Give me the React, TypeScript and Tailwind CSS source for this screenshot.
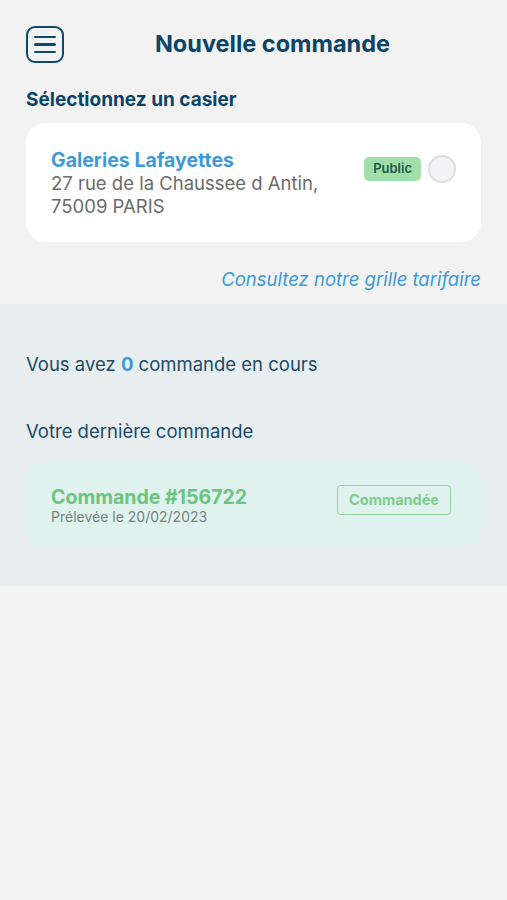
export default function App() {
  return (
    <div className="min-h-[900px] w-full bg-[#f2f2f2]" style={{ fontFamily: "Inter, 'Noto Sans', sans-serif" }}>
      <div className="px-[26px]">
        <div className="relative flex h-[88px] items-center justify-center">
          <div className="absolute left-0 top-[26px] flex h-[37px] w-[38px] flex-col items-center justify-center gap-[5px] rounded-[9px] border-[2.5px] border-[#0d4a6c]">
            <span className="block h-[2.5px] w-[22px] rounded bg-[#0d4a6c]" />
            <span className="block h-[2.5px] w-[22px] rounded bg-[#0d4a6c]" />
            <span className="block h-[2.5px] w-[22px] rounded bg-[#0d4a6c]" />
          </div>
          <h1 className="ml-[38px] text-[23.5px] font-bold text-[#0b4468]">Nouvelle commande</h1>
        </div>
        <div className="mt-[1px] text-[19px] font-bold leading-[22px] text-[#0b4468]">Sélectionnez un casier</div>
        <div className="mt-[12px] flex h-[119px] items-start justify-between rounded-[20px] bg-white pl-[25px] pr-[25px] pt-[25px]">
          <div>
            <div className="text-[19.5px] font-bold leading-[24px] text-[#3d9ad6]">Galeries Lafayettes</div>
            <div className="text-[18.5px] leading-[23px] text-[#6b6b6b]">27 rue de la Chaussee d Antin,<br />75009 PARIS</div>
          </div>
          <div className="mt-[7px] flex items-center gap-[7px]">
            <span className="flex h-[24px] items-center rounded-[5px] bg-[#9fdfaa] px-[9px] text-[13px] font-semibold text-[#1d5a46]">Public</span>
            <span className="block h-[28px] w-[28px] rounded-full border-[2.5px] border-[#dedede] bg-[#f4f4f6]" />
          </div>
        </div>
        <div className="mt-[26px] text-right text-[18.5px] italic leading-[22px] text-[#3d9ad6]">Consultez notre grille tarifaire</div>
      </div>
      <div className="mt-[14px] h-[282px] bg-[#e8eef0] px-[26px] pt-[49px]">
        <div className="text-[18.5px] leading-[22px] text-[#1c4a66]">
          Vous avez <span className="font-bold text-[#3d9ad6]">0</span> commande en cours
        </div>
        <div className="mt-[45px] text-[18.5px] leading-[22px] text-[#1c4a66]">Votre dernière commande</div>
        <div className="mt-[20px] flex h-[84px] items-center justify-between rounded-[16px] bg-[#dff2ee] pl-[25px] pr-[30px]">
          <div className="mt-[3px]">
            <div className="text-[19.5px] font-bold leading-[22px] text-[#6cc47e]">Commande #156722</div>
            <div className="text-[14px] leading-[18px] text-[#7a7f80]">Prélevée le 20/02/2023</div>
          </div>
          <span className="mt-[-8px] flex h-[30px] items-center rounded-[4px] border-[1.5px] border-[#8fd29c] px-[11px] text-[14.5px] font-bold text-[#7fcb8d]">Commandée</span>
        </div>
      </div>
    </div>
  );
}
